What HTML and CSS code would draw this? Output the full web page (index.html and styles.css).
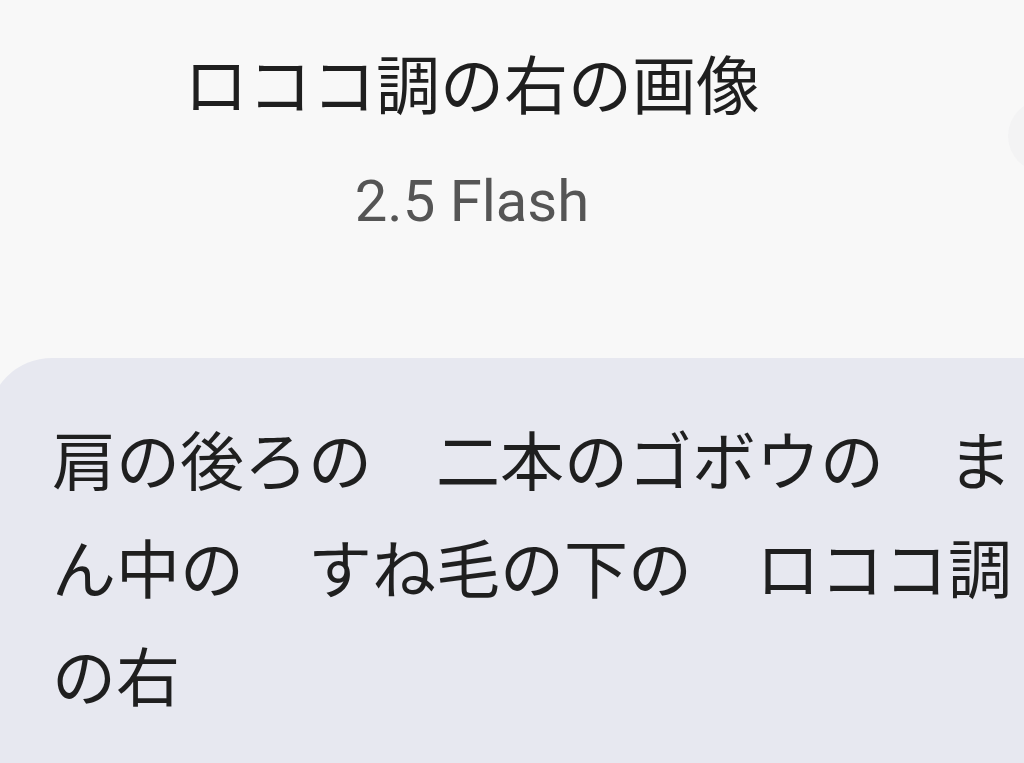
FILE: index.html
```html
<!DOCTYPE html>
<html lang="ja">
<head>
  <meta charset="UTF-8">
  <meta name="viewport" content="width=device-width, initial-scale=1.0">
  <title>ロココ調の右の画像</title>
  <link rel="stylesheet" href="styles.css">
</head>
<body>

  <div class="chat-header">
    <div class="chat-title">
      <h1>ロココ調の右の画像</h1>
      <p class="model-name">2.5 Flash</p>
    </div>
    <div class="avatar"></div>
  </div>

  <div class="user-bubble">
    <p>肩の後ろの　二本のゴボウの　まん中の　すね毛の下の　ロココ調の右</p>
  </div>

</body>
</html>
```

FILE: styles.css
```css
body {
  margin: 0;
  background-color: #f8f8f8;
  font-family: 'Noto Sans CJK JP', 'Noto Sans', sans-serif;
  color: #1f1f1f;
  overflow: hidden;
  height: 763px;
}

.chat-header {
  display: flex;
  align-items: flex-start;
  height: 358px;
}

.chat-title {
  flex: none;
  width: 944px;
  text-align: center;
  padding-top: 41px;
}

.chat-title h1 {
  margin: 0;
  font-size: 64px;
  font-weight: 400;
  line-height: 80px;
}

.model-name {
  margin: 48px 0 0;
  font-family: Roboto, 'Noto Sans', sans-serif;
  font-size: 58px;
  line-height: 64px;
  color: #555555;
}

.avatar {
  flex: none;
  width: 72px;
  height: 72px;
  margin-top: 100px;
  margin-left: 64px;
  border-radius: 50%;
  background-color: #f3f3f4;
}

.user-bubble {
  width: 1100px;
  margin-left: -12px;
  padding: 45px 0 40px 64px;
  background-color: #e7e8f0;
  border-radius: 64px 0 0 0;
  height: 400px;
}

.user-bubble p {
  margin: 0;
  width: 960px;
  font-size: 64px;
  line-height: 108px;
}
```
